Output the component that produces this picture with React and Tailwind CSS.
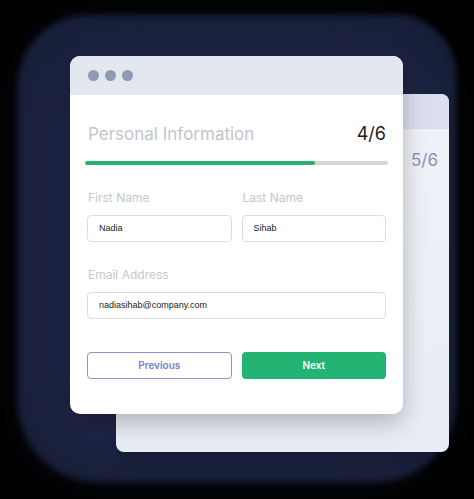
export default function App() {
  return (
    <div className="relative w-[474px] h-[499px] bg-black overflow-hidden" style={{ fontFamily: 'Inter, "Liberation Sans", sans-serif' }}>
      {/* glow behind the cards */}
      <div className="absolute left-[18px] top-[15px] w-[438px] h-[467px] rounded-tl-[70px] rounded-tr-[60px] rounded-b-[80px] bg-[#171e37] blur-[3px]" />
      <div className="absolute left-[40px] top-[40px] w-[390px] h-[420px] rounded-[60px] bg-[#1f2647] blur-[24px]" />

      {/* back card */}
      <div className="absolute left-[116px] top-[94px] w-[333px] h-[358px] rounded-[8px] overflow-hidden bg-gradient-to-b from-[#f0f2f8] to-[#e8ecf4] shadow-lg">
        <div className="h-[35px] bg-[#dcdef0]" />
        <div className="flex justify-end pr-[11px] pt-[19px]">
          <span className="text-[17px] leading-[24px] text-[#8c91bb]">5/6</span>
        </div>
      </div>

      {/* front card */}
      <div className="absolute left-[70px] top-[56px] w-[333px] h-[358px] rounded-[10px] overflow-hidden bg-white shadow-[0_8px_24px_rgba(0,0,0,0.25)]">
        <div className="h-[39px] bg-[#e3e7ef] flex items-center pl-[18px] gap-[6px]">
          <span className="w-[11px] h-[11px] rounded-full bg-[#8f9bb1]" />
          <span className="w-[11px] h-[11px] rounded-full bg-[#8f9bb1]" />
          <span className="w-[11px] h-[11px] rounded-full bg-[#8f9bb1]" />
        </div>
        <div className="pl-[17px] pr-[17px]">
          <div className="flex items-center justify-between mt-[27px] pl-[1px]">
            <span className="text-[17px] leading-[24px] text-[#c1c5cc]">Personal Information</span>
            <span className="text-[18px] leading-[24px] text-[#1b1b1b]">4/6</span>
          </div>
          <div className="mt-[15px] mx-[-2px] h-[4px] rounded-full bg-[#d6d6d8] overflow-hidden">
            <div className="h-full w-[76%] bg-[#27b26f] rounded-full" />
          </div>

          <div className="grid grid-cols-2 gap-[10px] mt-[25px]">
            <div>
              <div className="pl-[1px] text-[12px] leading-[16px] text-[#c3c7ce]">First Name</div>
              <div className="mt-[9px] h-[27px] rounded-[4px] border border-[#dcdde0] flex items-center pl-[11px] text-[9px] text-[#222]" style={{ fontFamily: '"Liberation Sans", Arial, sans-serif' }}>Nadia</div>
            </div>
            <div>
              <div className="pl-[1px] text-[12px] leading-[16px] text-[#c3c7ce]">Last Name</div>
              <div className="mt-[9px] h-[27px] rounded-[4px] border border-[#dcdde0] flex items-center pl-[11px] text-[9px] text-[#222]" style={{ fontFamily: '"Liberation Sans", Arial, sans-serif' }}>Sihab</div>
            </div>
          </div>

          <div className="mt-[25px] pl-[1px] text-[12px] leading-[16px] text-[#c3c7ce]">Email Address</div>
          <div className="mt-[9px] h-[27px] rounded-[4px] border border-[#dcdde0] flex items-center pl-[11px] text-[9px] text-[#222]" style={{ fontFamily: '"Liberation Sans", Arial, sans-serif' }}>nadiasihab@company.com</div>

          <div className="grid grid-cols-2 gap-[10px] mt-[33px]">
            <button className="h-[27px] rounded-[4px] border border-[#8f91cf] text-[10px] font-semibold text-[#7b80c0]">Previous</button>
            <button className="h-[27px] rounded-[4px] bg-[#23b473] text-[10px] font-semibold text-white">Next</button>
          </div>
        </div>
      </div>
    </div>
  )
}
